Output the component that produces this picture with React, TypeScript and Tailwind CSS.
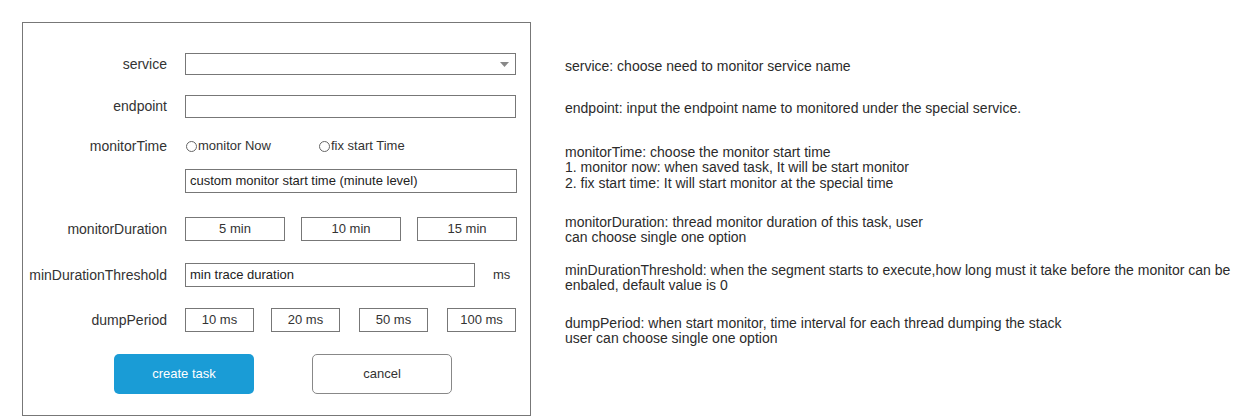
import type { ReactNode } from "react";

const field = "border border-[#777] bg-white";

function Row({ label, className, children }: { label: string; className?: string; children: ReactNode }) {
  return (
    <div className={`flex items-center ${className ?? ""}`}>
      <div className="w-[162px] shrink-0 pr-[18px] text-right text-[14px] text-[#333]">{label}</div>
      {children}
    </div>
  );
}

function Radio({ label, className }: { label: string; className?: string }) {
  return (
    <label className={`flex items-center ${className ?? ""}`}>
      <span className="mr-[1px] h-[11px] w-[11px] rounded-full border border-[#666]" />
      <span className="text-[13px] text-[#333]">{label}</span>
    </label>
  );
}

export default function App() {
  const durations = ["5 min", "10 min", "15 min"];
  // dump period options, with the spacing before each box
  const periods = [
    { label: "10 ms", gap: "" },
    { label: "20 ms", gap: "ml-[17px]" },
    { label: "50 ms", gap: "ml-[19px]" },
    { label: "100 ms", gap: "ml-[19px]" },
  ];

  return (
    <div className="flex h-[416px] w-[1242px] bg-white pl-[22px] pt-[22px] font-['Liberation_Sans',Arial,sans-serif] text-[#333]">
      {/* task form */}
      <div className="flex h-[394px] w-[509px] shrink-0 flex-col border border-[#777] pt-[30px]">
        <Row label="service" className="h-[22px]">
          <div className={`relative h-[22px] w-[331px] ${field}`}>
            <svg className="absolute right-[6px] top-[8px]" width="9" height="5" viewBox="0 0 9 5">
              <path d="M0 0h9L4.5 5z" fill="#888" />
            </svg>
          </div>
        </Row>

        <Row label="endpoint" className="mt-[20px] h-[23px]">
          <div className={`h-[23px] w-[331px] ${field}`} />
        </Row>

        <Row label="monitorTime" className="mt-[20px] h-[16px]">
          <Radio label="monitor Now" className="ml-[1px] w-[133px]" />
          <Radio label="fix start Time" />
        </Row>

        <Row label="" className="mt-[15px] h-[24px]">
          <div className={`flex h-[24px] w-[332px] items-center px-[4px] text-[13px] text-[#222] ${field}`}>
            custom monitor start time (minute level)
          </div>
        </Row>

        <Row label="monitorDuration" className="mt-[24px] h-[24px]">
          <div className="flex w-[332px] justify-between">
            {durations.map((d) => (
              <div key={d} className={`flex h-[24px] w-[100px] items-center justify-center text-[13px] ${field}`}>
                {d}
              </div>
            ))}
          </div>
        </Row>

        <Row label="minDurationThreshold" className="mt-[22px] h-[24px]">
          <div className={`flex h-[24px] w-[290px] items-center px-[4px] text-[13px] text-[#222] ${field}`}>
            min trace duration
          </div>
          <span className="ml-[18px] text-[13px]">ms</span>
        </Row>

        <Row label="dumpPeriod" className="mt-[21px] h-[24px]">
          <div className="flex">
            {periods.map((p) => (
              <div key={p.label} className={`flex h-[24px] w-[69px] items-center justify-center text-[13px] ${p.gap} ${field}`}>
                {p.label}
              </div>
            ))}
          </div>
        </Row>

        <div className="mt-[22px] flex h-[40px] pl-[91px]">
          <button className="h-[40px] w-[140px] rounded-[5px] bg-[#1a9cd6] text-[13px] text-white">create task</button>
          <button className="ml-[58px] h-[40px] w-[140px] rounded-[5px] border border-[#888] bg-white text-[13px] text-[#333]">
            cancel
          </button>
        </div>
      </div>

      {/* field notes */}
      <div className="ml-[34px] flex flex-col pt-[37px] text-[14px] leading-[15.5px] text-[#2b2b2b]">
        <p>service: choose need to monitor service name</p>
        <p className="mt-[26.5px]">endpoint: input the endpoint name to monitored under the special service.</p>
        <p className="mt-[28px]">
          monitorTime: choose the monitor start time
          <br />
          1. monitor now: when saved task, It will be start monitor
          <br />
          2. fix start time: It will start monitor at the special time
        </p>
        <p className="mt-[23.5px]">
          monitorDuration: thread monitor duration of this task, user
          <br />
          can choose single one option
        </p>
        <p className="mt-[17px] leading-[15.5px]">
          minDurationThreshold: when the segment starts to execute,how long must it take before the monitor can be
          <br />
          enbaled, default value is 0
        </p>
        <p className="mt-[22px]">
          dumpPeriod: when start monitor, time interval for each thread dumping the stack
          <br />
          user can choose single one option
        </p>
      </div>
    </div>
  );
}
